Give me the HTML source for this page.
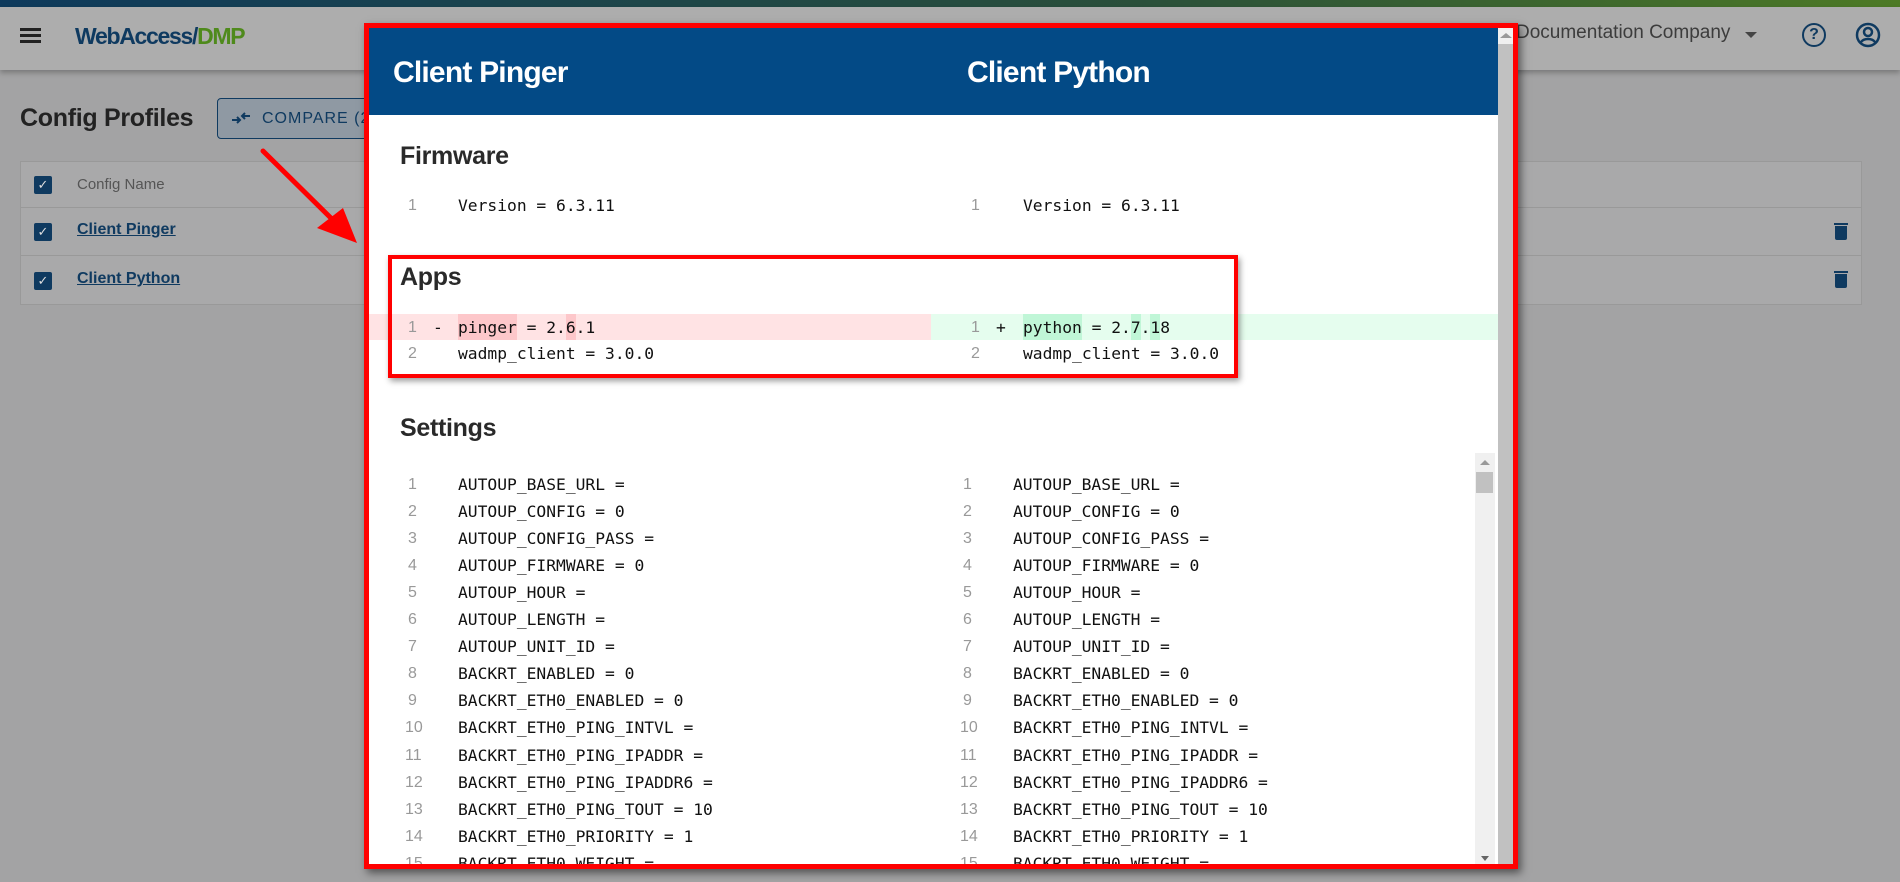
<!DOCTYPE html>
<html><head><meta charset="utf-8"><style>
*{margin:0;padding:0;box-sizing:border-box}
body{width:1900px;height:882px;overflow:hidden;background:#a3a3a4;font-family:"Liberation Sans",Arial,sans-serif;position:relative}
.a{position:absolute}
.mono{font-family:"DejaVu Sans Mono","Liberation Mono",monospace;font-size:16.3px;color:#111;white-space:pre}
.num{font-family:"Liberation Sans",sans-serif;font-size:16px;color:#999}
h2{position:absolute;font-size:25px;font-weight:bold;color:#2a2a2a;letter-spacing:-0.3px}
</style></head><body>
<div class="a" style="left:0;top:0;width:1900px;height:7px;background:linear-gradient(90deg,#0e3a5c,#2a4f3a 60%,#4d7a25)"></div>
<div class="a" style="left:0;top:7px;width:1900px;height:63px;background:#adadad;box-shadow:0 3px 5px rgba(0,0,0,.25)"></div>
<div class="a" style="left:20px;top:28px;width:21px;height:3px;background:#222;box-shadow:0 6px 0 #222,0 12px 0 #222"></div>
<div class="a" style="left:75px;top:23px;font-size:23px;font-weight:bold;letter-spacing:-1.3px;color:#0f3a60">WebAccess/<span style="color:#4f8a1c">DMP</span></div>
<div class="a" style="left:1516px;top:22px;font-size:19px;color:#3c3c3c">Documentation Company</div>
<div class="a" style="left:1745px;top:32px;border:6px solid transparent;border-top:6px solid #444;border-bottom:0"></div>
<div class="a" style="left:1802px;top:23px;width:24px;height:24px;border:2.5px solid #0f3a60;border-radius:50%;font-size:16px;font-weight:bold;color:#0f3a60;text-align:center;line-height:19px">?</div>
<svg class="a" style="left:1855px;top:22px" width="26" height="26" viewBox="0 0 26 26"><circle cx="13" cy="13" r="11" fill="none" stroke="#0f3a60" stroke-width="2.5"/><circle cx="13" cy="10" r="4" fill="none" stroke="#0f3a60" stroke-width="2.5"/><path d="M6 20c3-4 11-4 14 0" fill="none" stroke="#0f3a60" stroke-width="2.5"/></svg>
<div class="a" style="left:20px;top:104px;font-size:25px;font-weight:bold;color:#222;letter-spacing:-0.3px">Config Profiles</div>
<div class="a" style="left:217px;top:98px;width:160px;height:41px;border:1.5px solid #0f3a60;border-radius:4px;background:#8f99a3;color:#0f3a60;font-size:16px;letter-spacing:1px;padding:11px 0 0 44px;white-space:nowrap;overflow:hidden">COMPARE (2)</div>
<svg class="a" style="left:231px;top:110px" width="20" height="16" viewBox="0 0 20 16"><path d="M1 10h8M6 7l3 3-3 3M19 6h-8M14 3l-3 3 3 3" fill="none" stroke="#0f3a60" stroke-width="2"/></svg>
<div class="a" style="left:20px;top:161px;width:1842px;height:144px;border:1px solid #999;background:#a9a9aa"></div>
<div class="a" style="left:20px;top:207px;width:1842px;height:1px;background:#999"></div>
<div class="a" style="left:20px;top:255px;width:1842px;height:1px;background:#999"></div>
<div class="a" style="left:34px;top:176px;width:18px;height:18px;background:#0f3a60;border-radius:2px;color:#ddd;font-size:13px;text-align:center;line-height:18px">✓</div>
<div class="a" style="left:34px;top:223px;width:18px;height:18px;background:#0f3a60;border-radius:2px;color:#ddd;font-size:13px;text-align:center;line-height:18px">✓</div>
<div class="a" style="left:34px;top:272px;width:18px;height:18px;background:#0f3a60;border-radius:2px;color:#ddd;font-size:13px;text-align:center;line-height:18px">✓</div>
<div class="a" style="left:77px;top:176px;font-size:15px;color:#555">Config Name</div>
<div class="a" style="left:77px;top:221px;font-size:16px;font-weight:bold;color:#0f3a60;text-decoration:underline">Client Pinger</div>
<div class="a" style="left:77px;top:270px;font-size:16px;font-weight:bold;color:#0f3a60;text-decoration:underline">Client Python</div>
<div class="a" style="left:1835px;top:226px;width:12px;height:14px;background:#0f3a60;border-radius:0 0 2px 2px"></div>
<div class="a" style="left:1834px;top:223px;width:14px;height:2px;background:#0f3a60"></div>
<div class="a" style="left:1835px;top:274px;width:12px;height:14px;background:#0f3a60;border-radius:0 0 2px 2px"></div>
<div class="a" style="left:1834px;top:271px;width:14px;height:2px;background:#0f3a60"></div>
<svg class="a" style="left:255px;top:145px" width="110" height="110"><line x1="8" y1="6" x2="85" y2="82" stroke="#f00" stroke-width="5" stroke-linecap="round"/><polygon points="102,98 62,83 88,63" fill="#f00"/></svg>

<div class="a" style="left:364px;top:23px;width:1154px;height:846px;border:5px solid #f00;background:#fff;box-shadow:3px 4px 8px rgba(0,0,0,.5);overflow:hidden">
 <div class="a" style="left:0;top:0;width:1129px;height:87px;background:#034a86"></div>
 <div class="a" style="left:1129px;top:0;width:16px;height:836px;background:#c1c1c1"></div>
 <div class="a" style="left:1129px;top:0;width:16px;height:16px;background:#f0f0f0"></div>
 <div class="a" style="left:1131px;top:5px;border:6px solid transparent;border-bottom:5px solid #999;border-top:0"></div>
 <div class="a" style="left:24px;top:28px;font-size:30px;font-weight:bold;color:#fff;letter-spacing:-0.8px">Client Pinger</div>
 <div class="a" style="left:598px;top:28px;font-size:30px;font-weight:bold;color:#fff;letter-spacing:-0.8px">Client Python</div>
 <h2 style="left:31px;top:114px">Firmware</h2>
 <div class="a num" style="left:39px;top:169px">1</div><div class="a mono" style="left:89px;top:168px">Version = 6.3.11</div>
 <div class="a num" style="left:602px;top:169px">1</div><div class="a mono" style="left:654px;top:168px">Version = 6.3.11</div>
 <h2 style="left:31px;top:235px">Apps</h2>
 <div class="a" style="left:0;top:286px;width:562px;height:26px;background:#ffe3e4"></div>
 <div class="a" style="left:562px;top:286px;width:567px;height:26px;background:#e5fdee"></div>
 <div class="a" style="left:89px;top:286px;width:59px;height:26px;background:#fdc7ca"></div>
 <div class="a" style="left:197px;top:286px;width:10px;height:26px;background:#fdc7ca"></div>
 <div class="a" style="left:654px;top:286px;width:59px;height:26px;background:#c0f6d7"></div>
 <div class="a" style="left:762px;top:286px;width:10px;height:26px;background:#c0f6d7"></div>
 <div class="a" style="left:781px;top:286px;width:10px;height:26px;background:#c0f6d7"></div>
 <div class="a num" style="left:39px;top:291px">1</div><div class="a mono" style="left:64px;top:290px">-</div><div class="a mono" style="left:89px;top:290px">pinger = 2.6.1</div>
 <div class="a num" style="left:39px;top:317px">2</div><div class="a mono" style="left:89px;top:316px">wadmp_client = 3.0.0</div>
 <div class="a num" style="left:602px;top:291px">1</div><div class="a mono" style="left:627px;top:290px">+</div><div class="a mono" style="left:654px;top:290px">python = 2.7.18</div>
 <div class="a num" style="left:602px;top:317px">2</div><div class="a mono" style="left:654px;top:316px">wadmp_client = 3.0.0</div>
 <div class="a" style="left:19px;top:227px;width:850px;height:123px;border:4px solid #f00;box-shadow:2px 3px 6px rgba(0,0,0,.4)"></div>
 <h2 style="left:31px;top:386px">Settings</h2>
 <div class="a" style="left:1106px;top:425px;width:20px;height:420px;background:#f0f0f0"></div>
 <div class="a" style="left:1111px;top:432px;border:5px solid transparent;border-bottom:5px solid #999;border-top:0"></div>
 <div class="a" style="left:1107px;top:444px;width:17px;height:21px;background:#c1c1c1"></div>
 <div class="a" style="left:1112px;top:828px;border:4px solid transparent;border-top:5px solid #666;border-bottom:0"></div>
 <div id="L" class="a" style="left:0;top:444px"></div>
</div>
<script>
var r=["AUTOUP_BASE_URL =","AUTOUP_CONFIG = 0","AUTOUP_CONFIG_PASS =","AUTOUP_FIRMWARE = 0","AUTOUP_HOUR =","AUTOUP_LENGTH =","AUTOUP_UNIT_ID =","BACKRT_ENABLED = 0","BACKRT_ETH0_ENABLED = 0","BACKRT_ETH0_PING_INTVL =","BACKRT_ETH0_PING_IPADDR =","BACKRT_ETH0_PING_IPADDR6 =","BACKRT_ETH0_PING_TOUT = 10","BACKRT_ETH0_PRIORITY = 1","BACKRT_ETH0_WEIGHT ="],h="";
for(var i=0;i<r.length;i++){var t=i*27.05+3;
h+='<div class="a num" style="left:'+(i<9?39:36)+'px;top:'+(t+1)+'px">'+(i+1)+'</div><div class="a mono" style="left:89px;top:'+t+'px">'+r[i]+'</div>';
h+='<div class="a num" style="left:'+(i<9?594:591)+'px;top:'+(t+1)+'px">'+(i+1)+'</div><div class="a mono" style="left:644px;top:'+t+'px">'+r[i]+'</div>';}
document.getElementById('L').innerHTML=h;
</script>
</body></html>
